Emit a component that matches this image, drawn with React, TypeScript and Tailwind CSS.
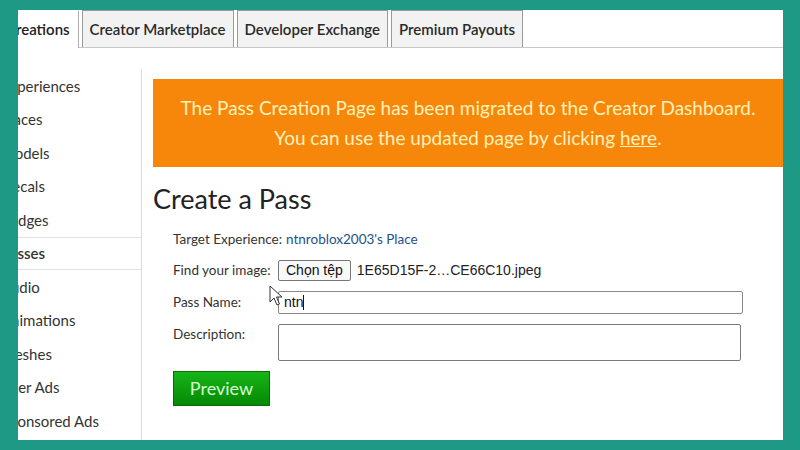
import React from "react";

const sans = { fontFamily: "Lato, 'Noto Sans', sans-serif" };
const arial = { fontFamily: "'Liberation Sans', Arial, sans-serif" };

const sideItems = [
  "Experiences",
  "Places",
  "Models",
  "Decals",
  "Badges",
  "Passes",
  "Audio",
  "Animations",
  "Meshes",
  "User Ads",
  "Sponsored Ads",
];

export default function App() {
  return (
    <div className="w-[800px] h-[450px] bg-[#1e9985] overflow-hidden pt-[10px] pl-[18px] pr-[17px] pb-[10px]" style={sans}>
      <div className="relative bg-white h-full overflow-hidden flex flex-col">
        {/* Tabs */}
        <div className="flex items-end h-[38px] pt-[1px] border-b border-[#c8c8c8] shrink-0">
          <div className="h-[37px] ml-[-52px] pl-[40px] pr-[8px] bg-white border-r border-[#b0b0b0] flex items-center text-[15px] text-[#222] font-semibold relative top-[1px]">
            Creations
          </div>
          <div className="flex gap-[3px] ml-[3px]">
            {["Creator Marketplace", "Developer Exchange", "Premium Payouts"].map((t) => (
              <div
                key={t}
                className="h-[37px] px-[7px] bg-[#f2f2f2] border border-b-0 border-[#9a9a9a] flex items-center text-[15px] text-[#2a2a2a] font-semibold"
              >
                {t}
              </div>
            ))}
          </div>
        </div>

        <div className="flex flex-1 pt-[21px]">
          {/* Sidebar */}
          <div className="w-[124px] shrink-0 border-r border-[#dcdcdc] flex flex-col">
            {sideItems.map((s) => (
              <div
                key={s}
                className={
                  "h-[33.5px] shrink-0 flex items-center text-[15px] text-[#333] whitespace-nowrap " +
                  (s === "Passes" ? "border-y border-[#e0e0e0] font-semibold text-[#222]" : "")
                }
              >
                <span className="ml-[-17px]">{s}</span>
              </div>
            ))}
          </div>

          {/* Main */}
          <div className="flex-1 pl-[11px] pt-[10px]">
            <div className="h-[88px] bg-[#f7870b] flex flex-col items-center justify-center text-[#fff1b8] text-[19px] leading-[30px]">
              <div>The Pass Creation Page has been migrated to the Creator Dashboard.</div>
              <div>
                You can use the updated page by clicking <span className="underline">here</span>.
              </div>
            </div>

            <h1 className="text-[27px] text-[#222] leading-[36px] mt-[14px]">Create a Pass</h1>

            <div className="pl-[20px] mt-[12px] text-[13.5px] text-[#333]">
              <div className="flex items-center h-[20px]">
                <span>Target Experience:</span>
                <span className="ml-[4px] text-[#23508a]">ntnroblox2003's Place</span>
              </div>

              <div className="flex items-center h-[22px] mt-[10px]">
                <span className="w-[105px] shrink-0">Find your image:</span>
                <button
                  className="h-[21px] px-[7px] border border-[#767676] rounded-[2px] bg-[#f8f8f8] text-[14px] text-[#111] leading-none"
                  style={arial}
                >
                  Chọn tệp
                </button>
                <span className="ml-[6px] text-[14px] text-[#222]" style={arial}>
                  1E65D15F-2…CE66C10.jpeg
                </span>
              </div>

              <div className="flex items-center h-[24px] mt-[9px]">
                <span className="w-[105px] shrink-0">Pass Name:</span>
                <div
                  className="h-[23px] w-[465px] border border-[#8a8a8a] rounded-[2px] flex items-center pl-[5px] text-[14px] text-[#111]"
                  style={arial}
                >
                  ntn<span className="inline-block w-[1px] h-[15px] bg-[#111]" />
                </div>
              </div>

              <div className="flex items-start mt-[10px]">
                <span className="w-[105px] shrink-0">Description:</span>
                <div className="h-[37px] w-[463px] border border-[#7a7a7a] rounded-[2px]" />
              </div>

              <button
                className="mt-[10px] w-[97px] h-[35px] bg-gradient-to-b from-[#17b517] to-[#058905] border border-[#0b6b0b] text-[#d6ffd0] text-[18px] flex items-center justify-center"
              >
                Preview
              </button>
            </div>
          </div>
        </div>

        {/* Mouse cursor */}
        <svg className="absolute left-[251px] top-[275px]" width="14" height="22" viewBox="0 0 14 22">
          <path
            d="M1 1 L1 17 L5 13 L8 20 L10.5 19 L7.5 12 L13 12 Z"
            fill="#fff"
            stroke="#333"
            strokeWidth="1"
            strokeLinejoin="round"
          />
        </svg>
      </div>
    </div>
  );
}
